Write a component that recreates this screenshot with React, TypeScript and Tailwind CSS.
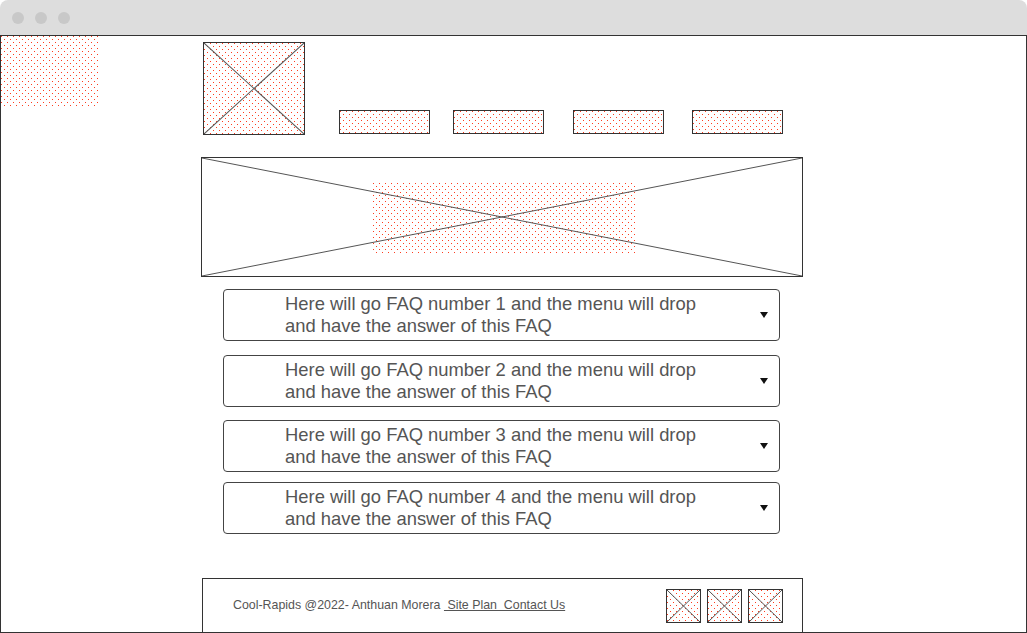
import React from "react";

let pid = 0;
function Dots({ className = "absolute inset-0" }: { className?: string }) {
  const id = React.useMemo(() => `dots${pid++}`, []);
  return (
    <svg className={`${className} pointer-events-none`} width="100%" height="100%" shapeRendering="crispEdges">
      <defs>
        <pattern id={id} width="6" height="6" patternUnits="userSpaceOnUse">
          <rect x="0" y="0" width="1" height="1" fill="#ff3d1f" />
          <rect x="3" y="3" width="1" height="1" fill="#ff3d1f" />
        </pattern>
      </defs>
      <rect width="100%" height="100%" fill={`url(#${id})`} />
    </svg>
  );
}

function Cross() {
  return (
    <svg className="absolute inset-0 h-full w-full" preserveAspectRatio="none" viewBox="0 0 100 100">
      <line x1="0" y1="0" x2="100" y2="100" stroke="#555" strokeWidth="1" vectorEffect="non-scaling-stroke" />
      <line x1="100" y1="0" x2="0" y2="100" stroke="#555" strokeWidth="1" vectorEffect="non-scaling-stroke" />
    </svg>
  );
}

function NavBox({ className = "" }: { className?: string }) {
  return (
    <div className={`relative h-[24px] w-[91px] border border-[#333] ${className}`}>
      <Dots />
    </div>
  );
}

function Faq({ n, className = "" }: { n: number; className?: string }) {
  return (
    <div
      className={`flex h-[52px] w-[557px] items-center rounded-[4px] border border-[#444] pl-[61px] pr-[10px] ${className}`}
    >
      <div className="flex-1 text-[18.4px] leading-[22px] text-[#555]">
        Here will go FAQ number {n} and the menu will drop
        <br />
        and have the answer of this FAQ
      </div>
      <svg width="8" height="6" viewBox="0 0 8 6" className="mr-[1px]">
        <polygon points="0,0 8,0 4,6" fill="#111" />
      </svg>
    </div>
  );
}

function Social() {
  return (
    <div className="relative h-[34px] w-[35px] border border-[#333]">
      <Dots />
      <Cross />
    </div>
  );
}

export default function App() {
  return (
    <div
      className="h-[633px] w-[1027px] overflow-hidden bg-white"
      style={{ fontFamily: '"Liberation Sans", Arial, sans-serif' }}
    >
      <div className="flex h-full flex-col">
        <div className="flex h-[35px] shrink-0 items-center gap-[11px] rounded-t-[8px] bg-[#dddddd] pl-[12px]">
          <div className="h-[12px] w-[12px] rounded-full bg-[#c8c8c8]" />
          <div className="h-[12px] w-[12px] rounded-full bg-[#c8c8c8]" />
          <div className="h-[12px] w-[12px] rounded-full bg-[#c8c8c8]" />
        </div>
        <div className="relative flex-1 overflow-hidden border border-[#333]">
          <Dots className="absolute left-0 top-0 h-[72px] w-[99px]" />
          <div className="ml-[200px] flex w-[602px] flex-col">
            <div className="mt-[6px] flex items-end">
              <div className="relative ml-[2px] h-[93px] w-[102px] border border-[#333]">
                <Dots />
                <Cross />
              </div>
              <NavBox className="mb-[1px] ml-[34px]" />
              <NavBox className="mb-[1px] ml-[23px]" />
              <NavBox className="mb-[1px] ml-[29px]" />
              <NavBox className="mb-[1px] ml-[28px]" />
            </div>
            <div className="relative mt-[22px] h-[120px] w-[602px] border border-[#333]">
              <Dots className="absolute left-[171px] top-[25px] h-[70px] w-[263px]" />
              <Cross />
            </div>
            <div className="ml-[22px] flex flex-col">
              <Faq n={1} className="mt-[12px]" />
              <Faq n={2} className="mt-[14px]" />
              <Faq n={3} className="mt-[13px]" />
              <Faq n={4} className="mt-[10px]" />
            </div>
            <div className="ml-[1px] mt-[44px] flex h-[70px] w-[601px] items-start border border-[#333] pl-[30px] pr-[19px] pt-[10px]">
              <div className="mt-[8px] flex-1 text-[12.4px] leading-[16px] text-[#555]">
                Cool-Rapids @2022- Anthuan Morera <span className="underline">&nbsp;Site Plan &nbsp;Contact Us</span>
              </div>
              <div className="flex gap-[6px]">
                <Social />
                <Social />
                <Social />
              </div>
            </div>
          </div>
        </div>
      </div>
    </div>
  );
}
